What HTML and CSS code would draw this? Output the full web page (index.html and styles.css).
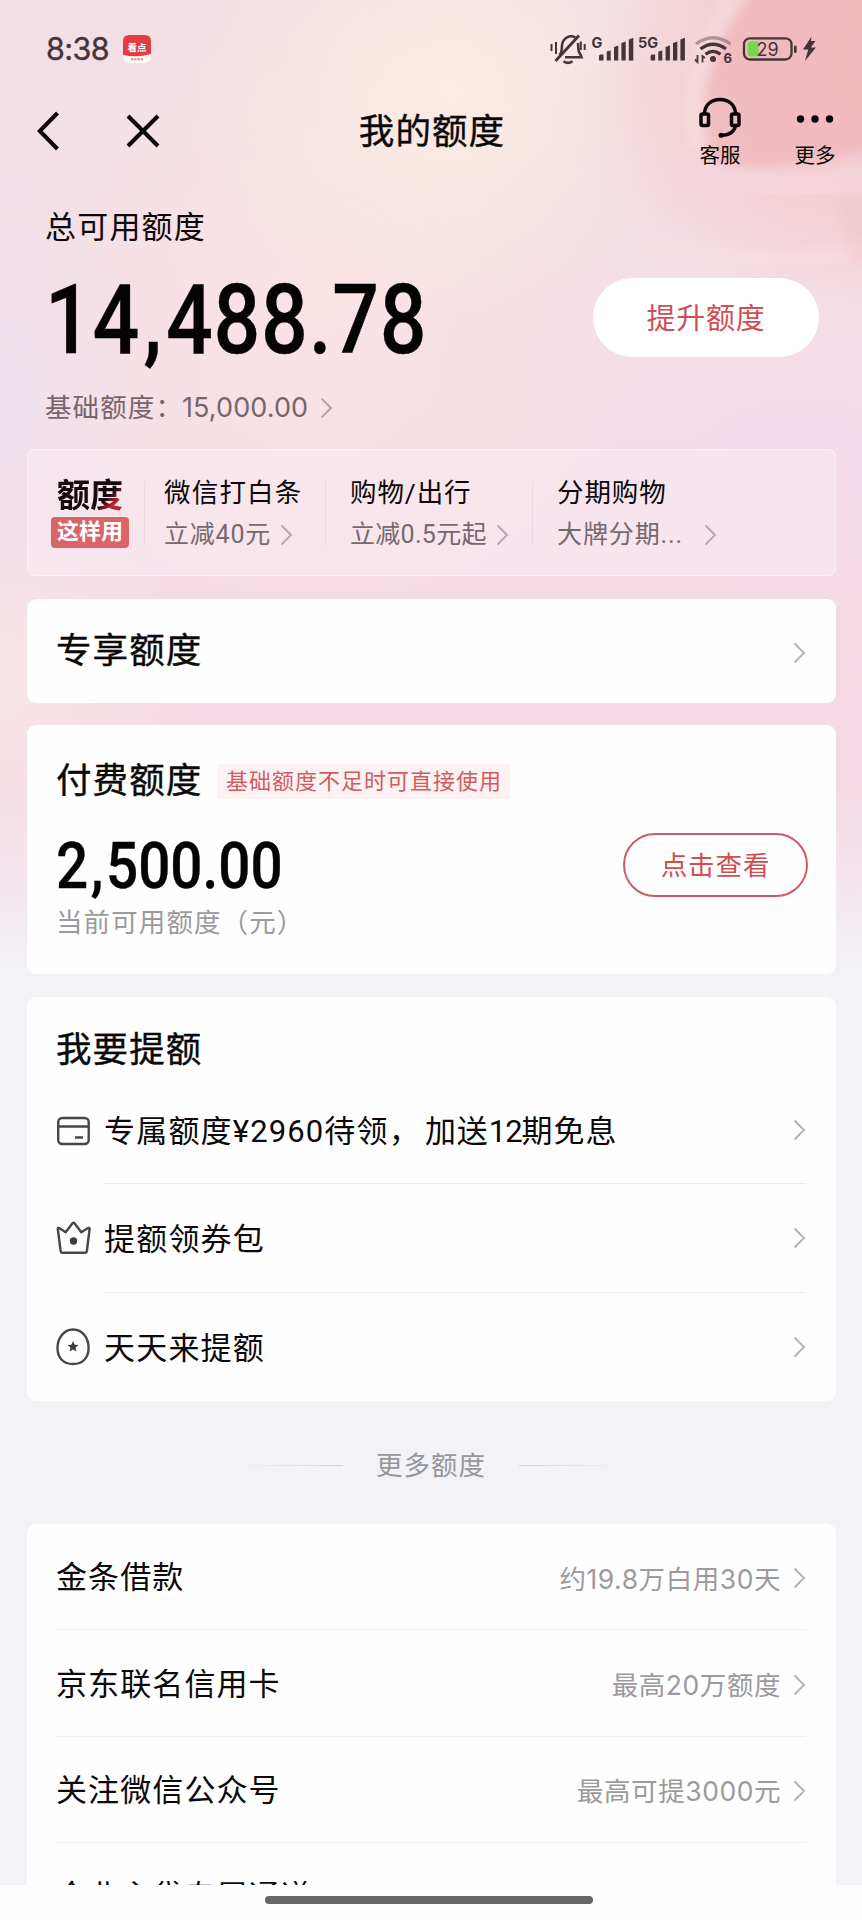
FILE: index.html
```html
<!DOCTYPE html>
<html lang="zh-CN">
<head>
<meta charset="utf-8">
<title>我的额度</title>
<link rel="stylesheet" href="styles.css">
</head>
<body>
<svg class="defs" width="0" height="0" aria-hidden="true">
  <symbol id="chev" viewBox="0 0 13 22"><path d="M1.5 1.5 L11 11 L1.5 20.5" fill="none" stroke="currentColor" stroke-width="2"/></symbol>
</svg>
<div class="screen">
  <svg class="petals" viewBox="0 0 862 420" aria-hidden="true">
    <defs>
      <filter id="soft" x="-20%" y="-20%" width="140%" height="140%"><feGaussianBlur stdDeviation="5"/></filter>
      <filter id="haze" x="-30%" y="-30%" width="160%" height="160%"><feGaussianBlur stdDeviation="26"/></filter>
    </defs>
    <path d="M640 0 C600 60 595 130 630 190 C670 240 760 250 900 240 L900 -20 Z" fill="#f3d2d6" opacity=".45" filter="url(#haze)"/>
    <path d="M742 -10 C705 50 690 110 712 160 C750 175 820 165 900 140 L900 -10 Z" fill="#f1b5b6" opacity=".7" filter="url(#soft)"/>
    <path d="M742 -10 C700 45 685 100 700 150" fill="none" stroke="#f8dfdf" stroke-width="20" opacity=".6" filter="url(#soft)"/>
    <path d="M618 0 C580 60 570 130 600 180" fill="none" stroke="#f9e4e3" stroke-width="12" opacity=".4" filter="url(#soft)"/>
    <path d="M640 236 C700 266 790 266 900 244" fill="none" stroke="#fae0e3" stroke-width="16" opacity=".5" filter="url(#soft)"/>
    <path d="M690 172 C760 200 830 190 900 168" fill="none" stroke="#f6d6df" stroke-width="30" opacity=".6" filter="url(#soft)"/>
    <path d="M835 200 L900 190 L900 262 L850 262 Z" fill="#f1c3c8" opacity=".4" filter="url(#soft)"/>
  </svg>

  <header class="status">
    <span class="clock">8:38</span>
    <svg class="app" viewBox="0 0 28 28">
      <rect width="28" height="28" rx="6" fill="#fff8f6"/>
      <path d="M0 6 Q0 0 6 0 H22 Q28 0 28 6 V19 Q14 23 0 20 Z" fill="#e43c40"/>
      <text x="14" y="16" text-anchor="middle" class="app-t">看点</text>
      <path d="M8 24.3 H20" stroke="#dc8c8c" stroke-width="2" stroke-dasharray="2.4 .8"/>
    </svg>
    <svg class="sys" viewBox="549 32 270 34">
      <g fill="none" stroke="#45343a" stroke-width="2.5">
        <path d="M559.5 55 C562.500 52 561.500 50 562 45 C563 37.500 570 34.500 575.500 37.500 M578 43 C578.500 48 577.500 51 580.500 54.500 L581.500 57.200 H565"/>
        <path d="M555.5 61 L579 35.5" stroke-width="2.9"/>
        <path d="M563.500 61.300 Q568 64.500 572.500 61.300" stroke-width="2.500"/>
        <path d="M551.5 44 V51 M556 42 V54 M580.800 41.500 V50 M584.700 44 V50" stroke-width="2"/>
      </g>
      <g fill="#45343a">
        <path d="M599 56q0-1.500 1.500-1.500h3v6h-4.500z M606.700 51.500l4-1v10h-4z M614 47l4.300-1.500v15h-4.300z M621.400 43l4.300-1.500v19h-4.300z M628.800 39.500l4.500-1.800v22.800h-4.500z"/>
        <path d="M650.600 56q0-1.500 1.500-1.500h3v6h-4.500z M658.300 51.500l4-1v10h-4z M665.600 47l4.300-1.500v15h-4.300z M673 43l4.300-1.500v19h-4.300z M680.400 39.500l4.500-1.800v22.800h-4.500z"/>
        <text x="591.500" y="47.500" class="net">G</text>
        <text x="638" y="47.500" class="net">5G</text>
        <circle cx="713" cy="59" r="3"/>
        <text x="723.500" y="62.500" class="w6">6</text>
        <path d="M697.500 55 V62 L695 59.500 M702.500 62.500 V56 L705 58" fill="none" stroke="#45343a" stroke-width="1.800"/>
        <path d="M811.500 36.500 L803 49.500 H808.200 L805 61 L815.800 47.600 H810.700 L815.500 41 H811 Z"/>
        <rect x="794" y="45.500" width="2.600" height="7.500" rx="1.300"/>
      </g>
      <g fill="none" stroke="#45343a" stroke-width="3.200">
        <path d="M696 44 Q713 31.500 730.500 44" opacity=".4"/>
        <path d="M700.500 49 Q713 39.500 726 49"/>
        <path d="M705.500 54.300 Q713 48.500 720.500 54.300"/>
      </g>
      <rect x="744" y="38.300" width="47.500" height="21.200" rx="6" fill="none" stroke="#45343a" stroke-width="2.300"/>
      <path d="M758.500 41.300 V56.500 H751 Q747.500 56.500 747.500 53 V44.800 Q747.500 41.300 751 41.300 Z" fill="#76d84c"/>
      <text x="767.500" y="55.500" text-anchor="middle" class="pct">29</text>
    </svg>
  </header>

  <nav class="nav">
    <div class="nav-left">
      <svg width="22" height="40" viewBox="0 0 22 40"><path d="M20.500 2 L2.800 20 L20.500 38" fill="none" stroke="#0c0508" stroke-width="4"/></svg>
      <svg width="34" height="34" viewBox="0 0 34 34"><path d="M2 2 L32 32 M32 2 L2 32" fill="none" stroke="#0c0508" stroke-width="4"/></svg>
    </div>
    <h1 class="title">我的额度</h1>
    <div class="nav-right">
      <div class="act">
        <svg width="42" height="42" viewBox="0 0 42 42"><g fill="none" stroke="#0c0508" stroke-width="3.500"><path d="M5.500 17 C5.500 -2.500 36.500 -2.500 36.500 17"/><rect x="2" y="17" width="7.500" height="11.500" rx="1.500"/><rect x="32.500" y="17" width="7.500" height="11.500" rx="1.500"/><path d="M36.500 28.500 C35.500 34.500 30 38 22.500 38.500" stroke-linecap="round"/></g><circle cx="22" cy="38.300" r="2.500" fill="#0c0508"/></svg>
        <span>客服</span>
      </div>
      <div class="act">
        <svg width="42" height="42" viewBox="0 0 42 42"><g fill="#0c0508"><circle cx="6.500" cy="22" r="3.700"/><circle cx="21" cy="22" r="3.700"/><circle cx="35.500" cy="22" r="3.700"/></g></svg>
        <span>更多</span>
      </div>
    </div>
  </nav>

  <section class="hero">
    <div class="hero-l">
      <div class="label">总可用额度</div>
      <div class="big">14<i>,</i>488<b>.</b>78</div>
      <div class="base">基础额度：<span>15,000.00</span><svg class="chev"><use href="#chev"/></svg></div>
    </div>
    <button class="raise">提升额度</button>
  </section>

  <section class="strip">
    <div class="how"><strong>额度</strong><em>这样用</em></div>
    <div class="use u1"><p>微信打白条</p><div class="sub">立减40元<svg class="chev"><use href="#chev"/></svg></div></div>
    <div class="use u2"><p>购物/出行</p><div class="sub">立减0.5元起<svg class="chev"><use href="#chev"/></svg></div></div>
    <div class="use u3"><p>分期购物</p><div class="sub">大牌分期...<svg class="chev"><use href="#chev"/></svg></div></div>
  </section>

  <section class="card excl"><h2>专享额度</h2><svg class="chev"><use href="#chev"/></svg></section>

  <section class="card paid">
    <div class="paid-h"><h2>付费额度</h2><span class="tag">基础额度不足时可直接使用</span></div>
    <div class="paid-b">
      <div><div class="mid">2<i>,</i>500.00</div><div class="cap">当前可用额度（元）</div></div>
      <button class="view">点击查看</button>
    </div>
  </section>

  <section class="card boost">
    <h2>我要提额</h2>
    <div class="row">
      <svg class="ico" viewBox="0 0 36 38"><g fill="none" stroke="#47474a" stroke-width="2.400"><rect x="2.200" y="6" width="30.500" height="26" rx="4"/><path d="M2 14.500 H33 M19 25.500 H27"/></g></svg>
      <div class="line"><span class="t1">专属额度<span class="amt">¥2960</span>待领，<span class="term">加送<span class="n12">12</span>期免息</span></span><svg class="chev"><use href="#chev"/></svg></div>
    </div>
    <div class="row">
      <svg class="ico" viewBox="0 0 36 38"><path d="M1.800 9 Q1.500 7.500 3 8 L9.700 12.300 L16.300 3.500 Q17.500 2 18.700 3.500 L25.300 12.300 L32 8 Q34 7.500 33.600 9 L30.800 31.500 Q30.700 32.700 29.500 32.700 H6 Q4.800 32.700 4.700 31.500 Z" fill="none" stroke="#47474a" stroke-width="2.400" stroke-linejoin="round"/><circle cx="17.500" cy="21" r="3.700" fill="#3c3c3e"/></svg>
      <div class="line"><span>提额领券包</span><svg class="chev"><use href="#chev"/></svg></div>
    </div>
    <div class="row">
      <svg class="ico" viewBox="0 0 36 38"><path d="M17 1.500 C27 1.500 32.600 10.500 32.600 20 C32.600 30 26.500 36 17 36 C7.500 36 1.500 30 1.500 20 C1.500 10.500 7.500 1.500 17 1.500 Z" fill="none" stroke="#47474a" stroke-width="2.400"/><path d="M17 13 L18.600 16.700 L22.500 17 L19.500 19.600 L20.500 23.500 L17 21.400 L13.500 23.500 L14.500 19.600 L11.500 17 L15.400 16.700 Z" fill="#3c3c3e"/></svg>
      <div class="line"><span>天天来提额</span><svg class="chev"><use href="#chev"/></svg></div>
    </div>
  </section>

  <div class="more"><span class="rule l"></span><span class="more-t">更多额度</span><span class="rule r"></span></div>

  <section class="card list">
    <div class="item"><span>金条借款</span><span class="val">约19.8万白用30天</span><svg class="chev"><use href="#chev"/></svg></div>
    <div class="item"><span>京东联名信用卡</span><span class="val">最高20万额度</span><svg class="chev"><use href="#chev"/></svg></div>
    <div class="item"><span>关注微信公众号</span><span class="val">最高可提3000元</span><svg class="chev"><use href="#chev"/></svg></div>
    <div class="item"><span>企业主贷专属通道</span></div>
  </section>

  <footer class="home"><span></span></footer>
</div>
</body>
</html>
```

FILE: styles.css
```css
* { box-sizing: border-box; margin: 0; padding: 0; }
body { font-family: Roboto, "Noto Sans CJK SC", sans-serif; color: #0b090a; background: #f2f2f7; }
.defs { display: block; }
.screen {
  position: relative; width: 862px; height: 1920px; overflow: hidden;
  display: flex; flex-direction: column;
  background:
    linear-gradient(180deg, rgba(242,242,247,0) 780px, #f2f2f7 975px),
    radial-gradient(ellipse 270px 230px at 450px 90px, rgba(251,236,227,.95), rgba(251,236,227,0)),
    radial-gradient(ellipse 300px 250px at 890px 60px, rgba(240,178,180,.9), rgba(240,190,195,0)),
    radial-gradient(ellipse 260px 160px at 800px 460px, rgba(244,217,238,.6), rgba(244,217,238,0)),
    radial-gradient(ellipse 140px 240px at 0 400px, rgba(236,229,240,.8), rgba(236,229,240,0)),
    radial-gradient(ellipse 200px 210px at 0 680px, rgba(250,232,232,.8), rgba(250,232,232,0)),
    radial-gradient(ellipse 320px 340px at 320px 300px, rgba(252,229,229,.8), rgba(252,229,229,0)),
    linear-gradient(180deg, #f2e0e7 0, #f5dde5 400px, #f5d9e4 700px);
}
.petals { position: absolute; left: 0; top: 0; width: 862px; height: 420px; }
.screen > :not(.petals) { position: relative; flex: none; }
button { font: inherit; }
.chev { width: 13px; height: 22px; color: #b3b2b5; flex: none; display: block; }

.status { height: 98px; padding: 0 43px 0 46px; display: flex; align-items: center; color: #45343a; }
.clock { font: 400 30.500px/40px Inter, sans-serif; width: 77px; letter-spacing: -.6px; -webkit-text-stroke: .4px; }
.app { width: 28px; height: 28px; }
.app-t { font: 700 9.500px "Noto Sans CJK SC", sans-serif; fill: #fff; }
.sys { width: 270px; height: 34px; margin-left: auto; }
.net { font: 700 14.500px Inter, sans-serif; }
.w6 { font: 700 13px Inter, sans-serif; }
.pct { font: 400 18px Inter, sans-serif; fill: #45343a; }

.nav { height: 78px; padding: 0 26px 0 37px; display: grid; grid-template-columns: 1fr auto 1fr; }
.nav-left { display: flex; align-items: center; gap: 67px; height: 66px; }
.title { font-size: 35.500px; font-weight: 400; letter-spacing: 1.100px; line-height: 68px; -webkit-text-stroke: .4px; padding-right: 9px; }
.nav-right { display: flex; justify-content: flex-end; gap: 53px; }
.act { width: 42px; display: flex; flex-direction: column; align-items: center; margin-top: -1px; font-size: 20.500px; line-height: 30px; white-space: nowrap; }
.act svg { display: block; margin-bottom: 2px; }

.hero { height: 273px; display: flex; justify-content: space-between; padding: 0 43px 0 45px; }
.label { font-size: 31px; letter-spacing: 1.200px; line-height: 40px; margin-top: 32px; }
.big, .mid { font-family: Roboto, sans-serif; font-weight: 500; transform-origin: 0 50%; white-space: nowrap; color: #060304; }
.big { font-size: 97px; line-height: 100px; margin-top: 22px; width: 380px; transform: scaleX(.85); -webkit-text-stroke: .4px; letter-spacing: .8px; }
.big i { font-style: normal; padding: 0 4px 0 4px; }
.big b { font-weight: 500; }
.base { display: flex; align-items: center; font-size: 26.500px; letter-spacing: 1.100px; line-height: 40px; margin-top: 18px; color: #75666d; }
.base span { font-family: Inter, sans-serif; font-size: 27px; letter-spacing: .1px; margin: 0 12px 0 -1px; }
.base .chev { color: #b8a5ae; }
.raise { width: 226px; height: 79px; margin-top: 102px; padding-bottom: 4px; border: 0; border-radius: 40px; background: #fff; color: #cf4f54; font-size: 29px; letter-spacing: .8px; }

.strip { margin: 0 26px 0 27px; height: 127px; border: 1.500px solid rgba(255,255,255,.45); border-radius: 8px; background: rgba(250,240,246,.45); display: flex; padding: 23px 0 0 22px; }
.how { width: 95px; padding-top: 4px; }
.how strong { display: block; margin-left: 7px; font-size: 33px; line-height: 38px; font-weight: 700; background: linear-gradient(135deg, #150b0e 66%, #b02530 78%); -webkit-background-clip: text; color: transparent; width: 68px; }
.how em { display: block; font-style: normal; margin: 2px 0 0 1px; width: 78px; height: 31px; line-height: 30px; border-radius: 4px; background: #db6468; color: #fff; font-size: 22px; font-weight: 700; text-align: center; }
.use { position: relative; height: 80px; padding-left: 19px; }
.use::before { content: ""; position: absolute; left: -1px; top: 8px; width: 1px; height: 64px; background: #ecd9e2; }
.u1 { width: 181px; }
.u2 { width: 207px; padding-left: 24px; }
.u3 { padding-left: 24px; }
.use p { font-size: 26.500px; letter-spacing: .9px; line-height: 39px; }
.u1 p { letter-spacing: 1.200px; }
.sub { display: flex; align-items: center; gap: 9px; font-size: 25px; line-height: 40px; margin-top: 3px; color: #76686f; white-space: nowrap; letter-spacing: .3px; }
.u1 .sub { letter-spacing: .8px; }
.u3 .sub { letter-spacing: .9px; gap: 21px; }
.sub .chev { color: #b9a7b1; }

.card { margin: 23px 26px 0 27px; background: #fefefe; border-radius: 9px; padding: 0 30px 0 29px; }
h2 { font-size: 35.500px; letter-spacing: 1.100px; font-weight: 400; -webkit-text-stroke: .4px; line-height: 50px; }
.excl { height: 104px; display: flex; justify-content: space-between; align-items: center; }
.excl .chev { margin-top: 4px; }
.paid { height: 249px; margin-top: 22px; padding-right: 28px; }
.paid-h { display: flex; align-items: center; padding-top: 31px; }
.tag { margin-left: 15px; height: 35px; width: 293px; line-height: 35px; text-align: center; background: #fcf2f2; color: #d05c62; font-size: 22px; letter-spacing: 1px; border-radius: 2px; white-space: nowrap; }
.paid-b { display: flex; justify-content: space-between; }
.mid { font-size: 65.500px; line-height: 66px; margin-top: 27px; transform: scaleX(.864); -webkit-text-stroke: .4px; }
.mid i { font-style: normal; padding: 0 3px 0 3px; }
.cap { font-size: 26.500px; letter-spacing: 1.100px; line-height: 40px; color: #9b9a9d; margin-top: 4px; }
.view { width: 185px; height: 64px; margin-top: 27px; padding-bottom: 3px; border: 2px solid #cf5b62; border-radius: 32px; background: transparent; color: #cf4f4f; font-size: 26.500px; letter-spacing: .9px; }

.boost { height: 404px; padding-top: 28px; }
.boost .row { display: flex; align-items: center; height: 108.300px; }
.boost .row:nth-child(2) { margin-top: 1px; }
.ico { width: 36px; height: 38px; flex: none; margin-top: 1px; }
.line { flex: 1; margin-left: 12px; height: 100%; display: flex; align-items: center; justify-content: space-between; font-size: 31px; letter-spacing: 1.200px; border-bottom: 1px solid #ececee; }
.line > span { padding-bottom: 3px; }
.row:last-child .line { border: 0; }
.amt { letter-spacing: 1.100px; }
.term { margin-left: 4px; letter-spacing: .9px; }
.n12 { letter-spacing: -1px; }

.more { height: 123px; padding-top: 6px; display: flex; align-items: center; justify-content: center; gap: 33px; color: #97969b; font-size: 26.500px; letter-spacing: 1px; }
.more-t { padding-bottom: 5px; }
.rule { width: 107px; height: 1.500px; }
.l { background: linear-gradient(90deg, transparent, #d4d4d9); }
.r { background: linear-gradient(90deg, #d4d4d9, transparent); }

.list { margin-top: 0; height: 361px; border-radius: 9px 9px 0 0; overflow: hidden; }
.item { height: 106.400px; display: flex; align-items: center; font-size: 31px; letter-spacing: 1.100px; border-bottom: 1px solid #f1f1f2; }
.item > span:first-child { padding-bottom: 4px; }
.item .chev { margin-top: 3px; }
.val { margin-left: auto; margin-right: 12px; padding-top: 1px; font-family: Inter, "Noto Sans CJK SC", sans-serif; font-size: 26.500px; letter-spacing: .55px; color: #9b9a9d; }
.home { height: 35px; background: #fdfdfd; padding-top: 11px; }
.home span { display: block; width: 328px; height: 8px; border-radius: 4px; background: #666; margin: 0 auto; position: relative; left: -2px; }
```
